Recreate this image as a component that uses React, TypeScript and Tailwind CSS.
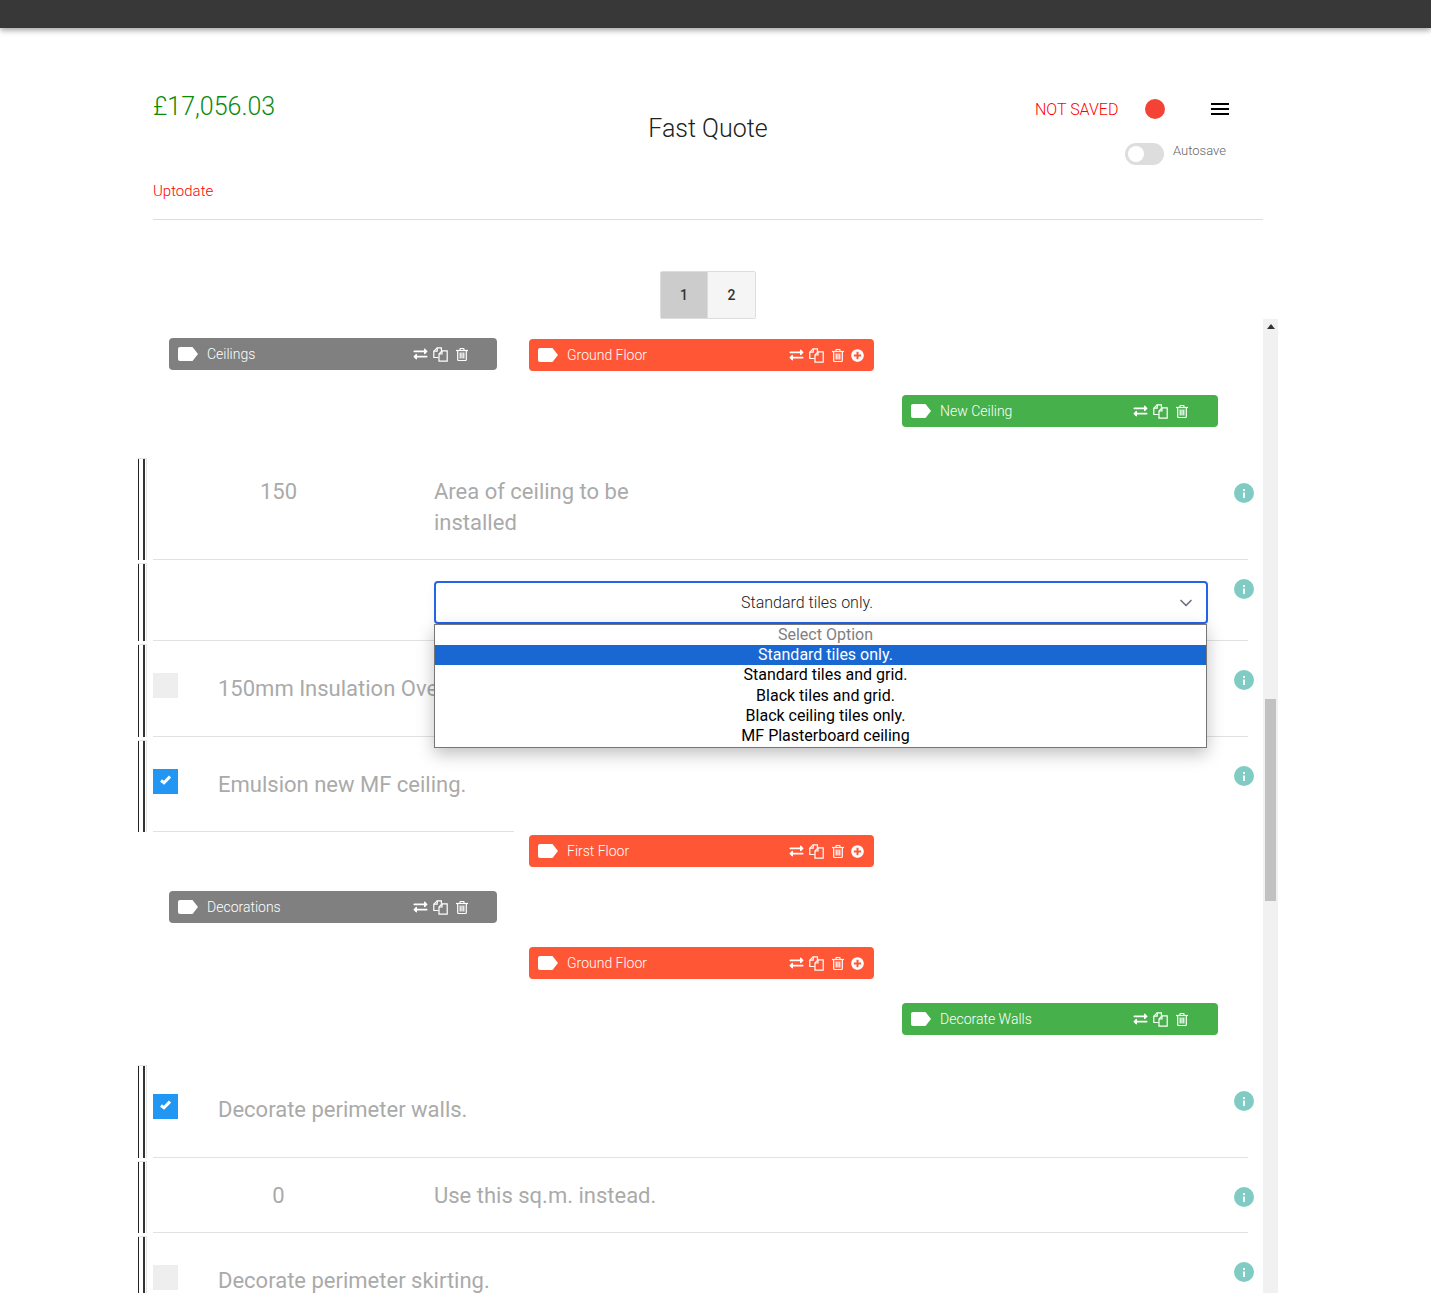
import { ReactNode } from 'react';
import { FaExchangeAlt, FaPlusCircle } from 'react-icons/fa';
import { ChevronDown } from 'lucide-react';

const font = { roboto: 'font-["Roboto",sans-serif]' };

function FilesIcon() {
  return (
    <svg width="15" height="15" viewBox="0 0 15 15" fill="none" stroke="currentColor" strokeWidth="1.2">
      <path d="M5.5 10.5H.8V4.2L4.2.8h4.2v3" />
      <path d="M4.2.8v3.4H.8" />
      <path d="M6 14.2V7l3-3.2h5.2v10.4z" />
      <path d="M9 3.8V7H6" />
    </svg>
  );
}

function TrashIcon() {
  return (
    <svg className="ml-[8px]" width="12" height="13" viewBox="0 0 12 13" fill="none" stroke="currentColor" strokeWidth="1.2">
      <path d="M0 2.5h12" />
      <path d="M4 2.5V1.2q0-.7.7-.7h2.6q.7 0 .7.7v1.3" />
      <path d="M1.7 2.5v9q0 1 1 1h6.6q1 0 1-1v-9" />
      <path d="M4.2 4.5v6M6 4.5v6M7.8 4.5v6" />
    </svg>
  );
}

function TagShape() {
  return (
    <svg width="20" height="14" viewBox="0 0 20 14" fill="white">
      <path d="M2 0h12.5L20 7l-5.5 7H2a2 2 0 0 1-2-2V2a2 2 0 0 1 2-2z" />
    </svg>
  );
}

function Tag({ label, bg, width, pr, plus, className }: { label: string; bg: string; width: string; pr: string; plus?: boolean; className: string }) {
  return (
    <div className={`flex h-8 items-center rounded-[4px] pl-[9px] text-white ${bg} ${width} ${pr} ${className}`}>
      <TagShape />
      <span className="ml-[9px] text-[14px] font-light">{label}</span>
      <div className="ml-auto flex items-center">
        <FaExchangeAlt className="h-[14px] w-[15px]" />
        <span className="ml-[5px]"><FilesIcon /></span>
        <TrashIcon />
        {plus && <FaPlusCircle className="ml-[7px] h-[13px] w-[13px]" />}
      </div>
    </div>
  );
}

function Info({ top }: { top: string }) {
  return (
    <div className={`-mr-[6px] flex h-5 w-5 shrink-0 items-center justify-center rounded-full bg-[#80cbc4] ${top}`}>
      <svg width="2" height="9" viewBox="0 0 2 9" fill="white">
        <rect width="2" height="2" />
        <rect y="3.5" width="2" height="5.5" />
      </svg>
    </div>
  );
}

function Row({ height, top, short, children }: { height: string; top: string; short?: boolean; children: ReactNode }) {
  return (
    <div className={`mt-[3px] flex ${height}`}>
      <div className="w-[15px] shrink-0">
        <div className="flex h-full w-[9px] border-t border-[#e4e4e4]">
          <div className="w-px bg-[#222]" />
          <div className="ml-1 w-[2px] bg-[#333]" />
          <div className="ml-[1px] w-px bg-[#e4e4e4]" />
        </div>
      </div>
      <div className="relative flex w-[1095px] items-start">
        <div className="flex-1">{children}</div>
        <Info top={top} />
        <div className={`absolute bottom-0 left-0 h-px bg-[#e2e2e2] ${short ? 'w-[361px]' : 'w-full'}`} />
      </div>
    </div>
  );
}

function CheckRow({ label, checked, height, short }: { label: string; checked?: boolean; height: string; short?: boolean }) {
  return (
    <Row height={height} top="mt-[26px]" short={short}>
      <div className="flex items-start pt-[29px]">
        <div className={`flex h-[25px] w-[25px] items-center justify-center ${checked ? 'bg-[#2196f3]' : 'bg-[#eeeeee]'}`}>
          {checked && (
            <svg className="mb-[3px]" width="11" height="10" viewBox="0 0 11 10" fill="none" stroke="white" strokeWidth="3">
              <path d="M1 5.5l3 2.3L10 1.5" />
            </svg>
          )}
        </div>
        <span className="ml-[40px] whitespace-nowrap text-[22px] leading-[31px] text-[#aaaaaa]">{label}</span>
      </div>
    </Row>
  );
}

function ValueRow({ value, label, height, top, pad, labelWidth }: { value: string; label: string; height: string; top: string; pad: string; labelWidth: string }) {
  return (
    <Row height={height} top={top}>
      <div className={`flex text-[22px] leading-[31px] text-[#aaaaaa] ${pad}`}>
        <div className="w-[251px] text-center">{value}</div>
        <div className={`ml-[30px] ${labelWidth}`}>{label}</div>
      </div>
    </Row>
  );
}

const options = ['Select Option', 'Standard tiles only.', 'Standard tiles and grid.', 'Black tiles and grid.', 'Black ceiling tiles only.', 'MF Plasterboard ceiling'];

export default function App() {
  return (
    <div className={`h-[1293px] w-[1431px] overflow-hidden bg-white ${font.roboto}`}>
      <div className="h-7 bg-[#383838] shadow-[0_2px_6px_rgba(0,0,0,0.4)]" />

      {/* Header */}
      <div className="ml-[153px] w-[1110px]">
        <div className="grid h-[192px] grid-cols-3 border-b border-[#dddddd]">
          <div>
            <div className="mt-[59px] text-[25px] leading-[40px] font-light text-[#0b8a0b]">£17,056.03</div>
            <div className="mt-[54px] text-[15px] leading-5 font-light text-[#ff0000]">Uptodate</div>
          </div>
          <div className="pt-[81px] text-center text-[25px] leading-10 font-light text-[#212121]">Fast Quote</div>
          <div className="pl-[142px]">
            <div className="mt-[71px] flex h-5 items-center">
              <span className="relative top-px text-[16px] font-light whitespace-nowrap text-[#ff0000]">NOT SAVED</span>
              <div className="ml-[27px] h-5 w-5 rounded-full bg-[#f44336]" />
              <div className="ml-[46px] flex w-[18px] flex-col gap-[3px]">
                <div className="h-[2px] bg-black" />
                <div className="h-[2px] bg-black" />
                <div className="h-[2px] bg-black" />
              </div>
            </div>
            <div className="mt-[24px] ml-[90px] flex items-start">
              <div className="flex h-[22px] w-[39px] items-center rounded-full bg-[#dddddd] pl-[3px]">
                <div className="h-4 w-4 rounded-full bg-white" />
              </div>
              <span className="-mt-[2px] ml-[9px] text-[13px] leading-5 font-light text-[#666666]">Autosave</span>
            </div>
          </div>
        </div>

        <div className="mt-[51px] flex justify-center">
          <div className="flex h-12 rounded-[2px] border border-[#dddddd] text-[14px] font-medium text-[#333333]">
            <div className="flex w-[47px] items-center justify-center border-r border-[#dddddd] bg-[#cccccc]">1</div>
            <div className="flex w-[47px] items-center justify-center bg-[#f5f5f5]">2</div>
          </div>
        </div>
      </div>

      {/* Scroll area */}
      <div className="ml-[138px] flex w-[1140px]">
        <div className="w-[1125px]">
          <div className="flex items-start pt-[19px]">
            <Tag label="Ceilings" bg="bg-[#808080]" width="w-[328px]" pr="pr-[29px]" className="ml-[31px]" />
            <Tag label="Ground Floor" bg="bg-[#ff5636]" width="w-[345px]" pr="pr-[10px]" plus className="mt-px ml-[32px]" />
          </div>
          <Tag label="New Ceiling" bg="bg-[#46b04a]" width="w-[316px]" pr="pr-[30px]" className="mt-[24px] ml-[764px]" />

          <div className="mt-[31px]" />
          <ValueRow value="150" label="Area of ceiling to be installed" height="h-[102px]" top="mt-[25px]" pad="pt-[18px]" labelWidth="w-[215px]" />

          <Row height="h-[78px]" top="mt-4">
            <div className="relative mt-[18px] ml-[281px] w-[774px]">
              <div className="flex h-[43px] items-center justify-between rounded-[4px] border-2 border-[#2563eb] pr-[10px] pl-[305px] shadow-[0_4px_10px_rgba(0,0,0,0.05)]">
                <span className="text-[16px] font-light text-[#212121]">Standard tiles only.</span>
                <ChevronDown className="h-5 w-5 text-[#6b7280]" />
              </div>
              <div className="absolute top-[43px] left-0 z-10 w-[773px] border border-[#767676] bg-white pb-px text-center text-[16px] leading-[20.2px] text-black shadow-[0_6px_16px_rgba(0,0,0,0.25)]">
                {options.map((o, i) => (
                  <div key={o} className={`pl-[10px] ${i === 0 ? 'text-[#808080]' : i === 1 ? 'bg-[#1967d2] text-white' : ''}`}>{o}</div>
                ))}
              </div>
            </div>
          </Row>

          <CheckRow label="150mm Insulation Over Ceiling" height="h-[93px]" />
          <CheckRow label="Emulsion new MF ceiling." checked height="h-[92px]" short />

          <Tag label="First Floor" bg="bg-[#ff5636]" width="w-[345px]" pr="pr-[10px]" plus className="mt-[3px] ml-[391px]" />
          <Tag label="Decorations" bg="bg-[#808080]" width="w-[328px]" pr="pr-[29px]" className="mt-[24px] ml-[31px]" />
          <Tag label="Ground Floor" bg="bg-[#ff5636]" width="w-[345px]" pr="pr-[10px]" plus className="mt-[24px] ml-[391px]" />
          <Tag label="Decorate Walls" bg="bg-[#46b04a]" width="w-[316px]" pr="pr-[30px]" className="mt-[24px] ml-[764px]" />

          <div className="mt-[30px]" />
          <CheckRow label="Decorate perimeter walls." checked height="h-[93px]" />
          <ValueRow value="0" label="Use this sq.m. instead." height="h-[72px]" top="mt-[26px]" pad="pt-[19px]" labelWidth="w-[400px]" />
          <CheckRow label="Decorate perimeter skirting." height="h-[93px]" />
        </div>

        {/* Scrollbar */}
        <div className="h-[974px] w-[15px] bg-[#f1f1f1] pt-[5px]">
          <div className="mx-auto h-0 w-0 border-x-[4px] border-b-[5px] border-x-transparent border-b-[#333]" />
          <div className="mx-[2px] mt-[370px] h-[202px] bg-[#c1c1c1]" />
        </div>
      </div>
    </div>
  );
}
